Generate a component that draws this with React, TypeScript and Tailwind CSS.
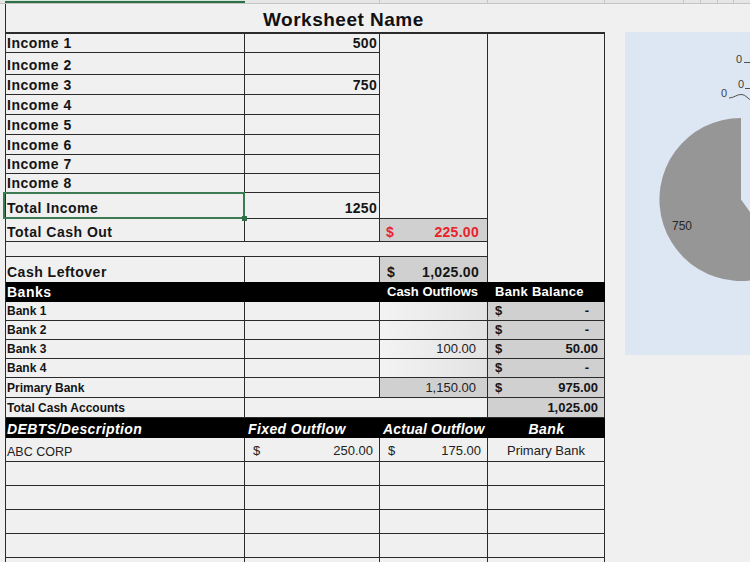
import React from "react";

const BD = "border-[#2b2b2b]";

function C({ className = "", children }: { className?: string; children?: React.ReactNode }) {
  return (
    <div className={`flex items-end overflow-hidden whitespace-nowrap leading-[1.15] ${BD} ${className}`}>{children}</div>
  );
}

const lab = "border-r border-b pl-[1px] pb-[1px] text-[14px] font-bold tracking-[0.5px] text-[#151515]";
const val = "border-r border-b justify-end pr-[2px] pb-[1px] text-[14px] font-bold tracking-[0.3px] text-[#151515]";
const bankLab = "border-r border-b pl-[1px] pb-[1px] text-[12px] font-bold text-[#151515]";
const blk = "bg-black text-white font-bold";

function BankRow({ name, out, bal, primary }: { name: string; out?: string; bal: string; primary?: boolean }) {
  return (
    <>
      <C className={bankLab}>{name}</C>
      <C className="border-r border-b" />
      <C
        className={`border-r border-b justify-end pr-[11px] pb-[1px] text-[13px] text-[#222] ${
          primary ? "bg-[#d0d0d0]" : "bg-gradient-to-r from-[#f3f3f3] to-[#e3e3e3]"
        }`}
      >
        {out}
      </C>
      <C className="border-r border-b bg-[#d0d0d0] justify-between pl-[7px] pr-[6px] pb-[1px] text-[13px] font-bold text-[#151515]">
        <span>$</span>
        <span className={bal === "-" ? "pr-[9px]" : ""}>{bal}</span>
      </C>
    </>
  );
}

function Blank() {
  return (
    <>
      <C className="border-r border-b" />
      <C className="border-r border-b" />
      <C className="border-r border-b" />
      <C className="border-r border-b" />
    </>
  );
}

export default function App() {
  const incomes = ["Income 1", "Income 2", "Income 3", "Income 4", "Income 5", "Income 6", "Income 7", "Income 8"];
  const vals: Record<string, string> = { "Income 1": "500", "Income 3": "750" };
  return (
    <div className="relative w-[750px] h-[562px] overflow-hidden bg-[#f0f0f0] font-['Liberation_Sans',Arial,sans-serif]">
      {/* column header strip */}
      <div className="flex h-[4px] bg-[#e6e6e6] border-b border-[#c4c4c4]">
        <div className="w-[5px]" />
        <div className="w-[240px] bg-[#d3e6d9] border-b-2 border-[#2f6f48]" />
        <div className="w-[135px] border-r border-[#c4c4c4]" />
        <div className="w-[108px] border-r border-[#c4c4c4]" />
        <div className="w-[117px] border-r border-[#c4c4c4]" />
        <div className="w-[79px] border-r border-[#c4c4c4]" />
        <div className="w-[17px] border-r border-[#c4c4c4]" />
        <div className="w-[17px] border-r border-[#c4c4c4]" />
        <div className="w-[16px] border-r border-[#c4c4c4]" />
      </div>

      {/* title */}
      <div className={`ml-[5px] h-[28px] border-l ${BD} flex items-center pt-[3px] pl-[257px]`}>
        <span className="text-[19px] leading-[1.15] font-bold tracking-[0.5px] text-[#111]">Worksheet Name</span>
      </div>

      {/* sheet grid */}
      <div
        className={`ml-[5px] w-[600px] border-l border-t-2 ${BD} grid grid-cols-[239px_135px_108px_117px] grid-rows-[19px_22px_20px_20px_20px_20px_19px_19px_26px_23px_15px_25px_20px_19px_19px_19px_19px_20px_20px_20px_24px_24px_24px_24px_24px_24px]`}
      >
        {/* Income rows */}
        <C className={lab}>Income 1</C>
        <C className={val}>500</C>
        <C className="row-span-9 border-r border-b" />
        <C className="row-span-12 border-r" />
        {incomes.slice(1).map((n) => (
          <React.Fragment key={n}>
            <C className={lab}>{n}</C>
            <C className={val}>{vals[n] ?? ""}</C>
          </React.Fragment>
        ))}
        <C className={`${lab} relative overflow-visible pb-[2px]`}>
          Total Income
          <div className="absolute -left-[3px] -top-[1px] -right-[1px] -bottom-[1px] border-2 border-[#3b7a53]" />
          <div className="absolute -right-[3px] -bottom-[3px] w-[5px] h-[5px] bg-[#2f6f48]" />
        </C>
        <C className={`${val} pb-[2px]`}>1250</C>

        {/* Total Cash Out */}
        <C className={`${lab} pb-[1px]`}>Total Cash Out</C>
        <C className="border-r border-b" />
        <C className="border-r border-b bg-[#d0d0d0] justify-between pl-[6px] pr-[8px] pb-[1px] text-[14px] font-bold tracking-[0.3px] text-[#e8232a]">
          <span>$</span>
          <span>225.00</span>
        </C>

        {/* blank */}
        <C className="col-span-3 border-r border-b" />

        {/* Cash Leftover */}
        <C className="border-r pl-[1px] pb-[2px] text-[14px] font-bold tracking-[0.5px] text-[#151515]">Cash Leftover</C>
        <C className="border-r" />
        <C className="border-r bg-[#d0d0d0] justify-between pl-[7px] pr-[8px] pb-[2px] text-[14px] font-bold tracking-[0.3px] text-[#151515]">
          <span>$</span>
          <span>1,025.00</span>
        </C>

        {/* Banks header */}
        <C className={`${blk} pl-[1px] pb-[2px] text-[14px] tracking-[0.5px]`}>Banks</C>
        <C className={blk} />
        <C className={`${blk} pl-[7px] pb-[2px] text-[13px]`}>Cash Outflows</C>
        <C className={`${blk} pl-[7px] pb-[2px] text-[13px] tracking-[0.3px]`}>Bank Balance</C>

        <BankRow name="Bank 1" bal="-" />
        <BankRow name="Bank 2" bal="-" />
        <BankRow name="Bank 3" out="100.00" bal="50.00" />
        <BankRow name="Bank 4" bal="-" />
        <BankRow name="Primary Bank" out="1,150.00" bal="975.00" primary />

        {/* Total Cash Accounts */}
        <C className={bankLab}>Total Cash Accounts</C>
        <C className="col-span-2 border-r border-b" />
        <C className="border-r border-b bg-[#d0d0d0] justify-end pr-[6px] pb-[1px] text-[13px] font-bold text-[#151515]">
          1,025.00
        </C>

        {/* DEBTS header */}
        <C className={`${blk} italic pl-[1px] pb-[1px] text-[14px] tracking-[0.4px]`}>DEBTS/Description</C>
        <C className={`${blk} italic pl-[3px] pb-[1px] text-[14px] tracking-[0.4px]`}>Fixed Outflow</C>
        <C className={`${blk} italic pl-[3px] pb-[1px] text-[14px] tracking-[0.2px]`}>Actual Outflow</C>
        <C className={`${blk} italic justify-center pb-[1px] text-[14px] tracking-[0.4px]`}>Bank</C>

        {/* ABC CORP */}
        <C className="border-r border-b pl-[1px] pb-[2px] text-[12.5px] text-[#222]">ABC CORP</C>
        <C className="border-r border-b justify-between pl-[8px] pr-[6px] pb-[2px] text-[13px] text-[#222]">
          <span>$</span>
          <span>250.00</span>
        </C>
        <C className="border-r border-b justify-between pl-[8px] pr-[6px] pb-[2px] text-[13px] text-[#222]">
          <span>$</span>
          <span>175.00</span>
        </C>
        <C className="border-r border-b justify-center pb-[2px] text-[13px] text-[#222]">Primary Bank</C>

        <Blank />
        <Blank />
        <Blank />
        <Blank />
        <Blank />
      </div>

      {/* chart object */}
      <div className="absolute left-[625px] top-[32px] w-[125px] h-[323px] bg-[#dde7f3]">
        <svg width="125" height="323" className="overflow-visible">
          <path d="M116 167.5 L163.9 233.4 A81.5 81.5 0 1 1 116 86 Z" fill="#969696" />
          <g fontFamily="'Liberation Sans', Arial, sans-serif" fontSize="11" fill="#404040">
            <text x="111" y="31">0</text>
            <text x="113" y="56">0</text>
            <text x="96" y="65">0</text>
            <text x="47" y="198" fontSize="12" fill="#262626">750</text>
          </g>
          <g stroke="#404040" strokeWidth="0.9" fill="none">
            <path d="M119 30.5 L126 30.5" />
            <path d="M120 56.5 L126 56.5" />
            <path d="M104 66 C109 66 112 62 117 62.5 C121 63 123 67 127 69" />
          </g>
        </svg>
      </div>
    </div>
  );
}
